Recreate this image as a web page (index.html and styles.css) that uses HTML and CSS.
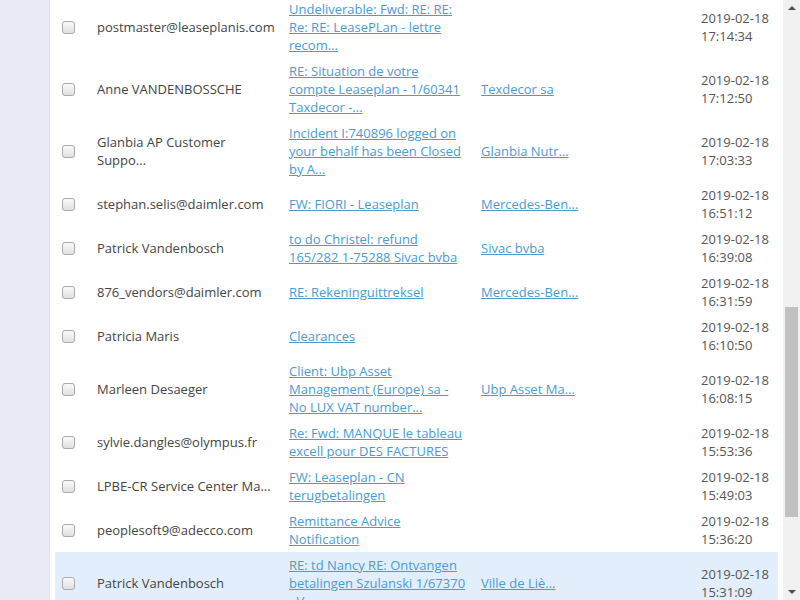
FILE: index.html
```html
<!DOCTYPE html>
<html>
<head>
<meta charset="utf-8">
<link rel="stylesheet" href="styles.css">
</head>
<body>
<div class="app">
  <aside class="side"></aside>
  <main class="main">
    <table class="mails">
      <colgroup>
        <col class="c-check"><col class="c-from"><col class="c-subj"><col class="c-comp"><col class="c-date">
      </colgroup>
      <tbody>
        <tr><td><input type="checkbox" class="cb"></td><td>postmaster@leaseplanis.com</td><td class="subj"><a href="#">Undeliverable: Fwd: RE: RE: Re: RE: LeasePLan - lettre recom...</a></td><td></td><td class="date">2019-02-18<br>17:14:34</td></tr>
        <tr><td><input type="checkbox" class="cb"></td><td>Anne VANDENBOSSCHE</td><td class="subj"><a href="#">RE: Situation de votre compte Leaseplan - 1/60341 Taxdecor -...</a></td><td><a href="#">Texdecor sa</a></td><td class="date">2019-02-18<br>17:12:50</td></tr>
        <tr><td><input type="checkbox" class="cb"></td><td>Glanbia AP Customer Suppo...</td><td class="subj"><a href="#">Incident I:740896 logged on your behalf has been Closed by A...</a></td><td><a href="#">Glanbia Nutr...</a></td><td class="date">2019-02-18<br>17:03:33</td></tr>
        <tr><td><input type="checkbox" class="cb"></td><td>stephan.selis@daimler.com</td><td class="subj"><a href="#">FW: FIORI - Leaseplan</a></td><td><a href="#">Mercedes-Ben...</a></td><td class="date">2019-02-18<br>16:51:12</td></tr>
        <tr><td><input type="checkbox" class="cb"></td><td>Patrick Vandenbosch</td><td class="subj"><a href="#">to do Christel: refund 165/282 1-75288 Sivac bvba</a></td><td><a href="#">Sivac bvba</a></td><td class="date">2019-02-18<br>16:39:08</td></tr>
        <tr><td><input type="checkbox" class="cb"></td><td>876_vendors@daimler.com</td><td class="subj"><a href="#">RE: Rekeninguittreksel</a></td><td><a href="#">Mercedes-Ben...</a></td><td class="date">2019-02-18<br>16:31:59</td></tr>
        <tr><td><input type="checkbox" class="cb"></td><td>Patricia Maris</td><td class="subj"><a href="#">Clearances</a></td><td></td><td class="date">2019-02-18<br>16:10:50</td></tr>
        <tr><td><input type="checkbox" class="cb"></td><td>Marleen Desaeger</td><td class="subj"><a href="#">Client: Ubp Asset Management (Europe) sa - No LUX VAT number...</a></td><td><a href="#">Ubp Asset Ma...</a></td><td class="date">2019-02-18<br>16:08:15</td></tr>
        <tr><td><input type="checkbox" class="cb"></td><td>sylvie.dangles@olympus.fr</td><td class="subj"><a href="#">Re: Fwd: MANQUE le tableau excell pour DES FACTURES</a></td><td></td><td class="date">2019-02-18<br>15:53:36</td></tr>
        <tr><td><input type="checkbox" class="cb"></td><td>LPBE-CR Service Center Ma...</td><td class="subj"><a href="#">FW: Leaseplan - CN terugbetalingen</a></td><td></td><td class="date">2019-02-18<br>15:49:03</td></tr>
        <tr><td><input type="checkbox" class="cb"></td><td>peoplesoft9@adecco.com</td><td class="subj"><a href="#">Remittance Advice Notification</a></td><td></td><td class="date">2019-02-18<br>15:36:20</td></tr>
        <tr class="hl"><td><input type="checkbox" class="cb"></td><td>Patrick Vandenbosch</td><td class="subj"><a href="#">RE: td Nancy RE: Ontvangen betalingen Szulanski 1/67370 - V...</a></td><td><a href="#">Ville de Liè...</a></td><td class="date">2019-02-18<br>15:31:09</td></tr>
      </tbody>
    </table>
  </main>
  <div class="scrollbar">
    <div class="arrow up"></div>
    <div class="track"><div class="thumb"></div></div>
    <div class="arrow down"></div>
  </div>
</div>
</body>
</html>
```
FILE: styles.css
```css
html, body {
  margin: 0;
  padding: 0;
  height: 100%;
  overflow: hidden;
  background: #ffffff;
}
body {
  font-family: "Open Sans", "Liberation Sans", sans-serif;
  font-size: 13px;
  color: #444444;
}
.app {
  display: flex;
  height: 600px;
}
.side {
  width: 49px;
  flex: none;
  background: #e9ecf4;
  border-right: 1px solid #e0e3ea;
}
.main {
  flex: 1;
  background: #ffffff;
  padding: 0 5px;
  overflow: hidden;
}
.mails {
  width: 723px;
  border-collapse: collapse;
  table-layout: fixed;
  margin-top: -4px;
}
.c-check { width: 34px; }
.c-from { width: 192px; }
.c-subj { width: 192px; }
.c-comp { width: 220px; }
.c-date { width: 85px; }
.mails td {
  padding: 4px 8px;
  line-height: 18px;
  vertical-align: middle;
  white-space: normal;
}
.mails td:first-child {
  padding: 4px 0 4px 7px;
}
.mails td.subj {
  padding-right: 6.5px;
}
.mails tr.hl td {
  background: #e2eefc;
}
.mails a {
  color: #4a9cd0;
  text-decoration: underline;
}
.date {
  color: #555555;
}
.cb {
  -webkit-appearance: none;
  appearance: none;
  display: block;
  width: 13px;
  height: 13px;
  margin: 0;
  border: 1px solid #aaaaaa;
  border-radius: 3px;
  background: linear-gradient(#fafafa, #e0e0e0);
  box-sizing: border-box;
}
.scrollbar {
  width: 17px;
  flex: none;
  background: #f1f1f1;
  display: flex;
  flex-direction: column;
}
.arrow {
  height: 17px;
  flex: none;
  position: relative;
}
.arrow::after {
  content: "";
  position: absolute;
  left: 5px;
  width: 0;
  height: 0;
  border-left: 4px solid transparent;
  border-right: 4px solid transparent;
}
.up::after {
  top: 6px;
  border-bottom: 4px solid #505050;
}
.down::after {
  top: 7px;
  border-top: 4px solid #505050;
}
.track {
  flex: 1;
  padding-top: 290px;
}
.thumb {
  margin: 0 2px;
  height: 210px;
  background: #c1c1c1;
}
```
